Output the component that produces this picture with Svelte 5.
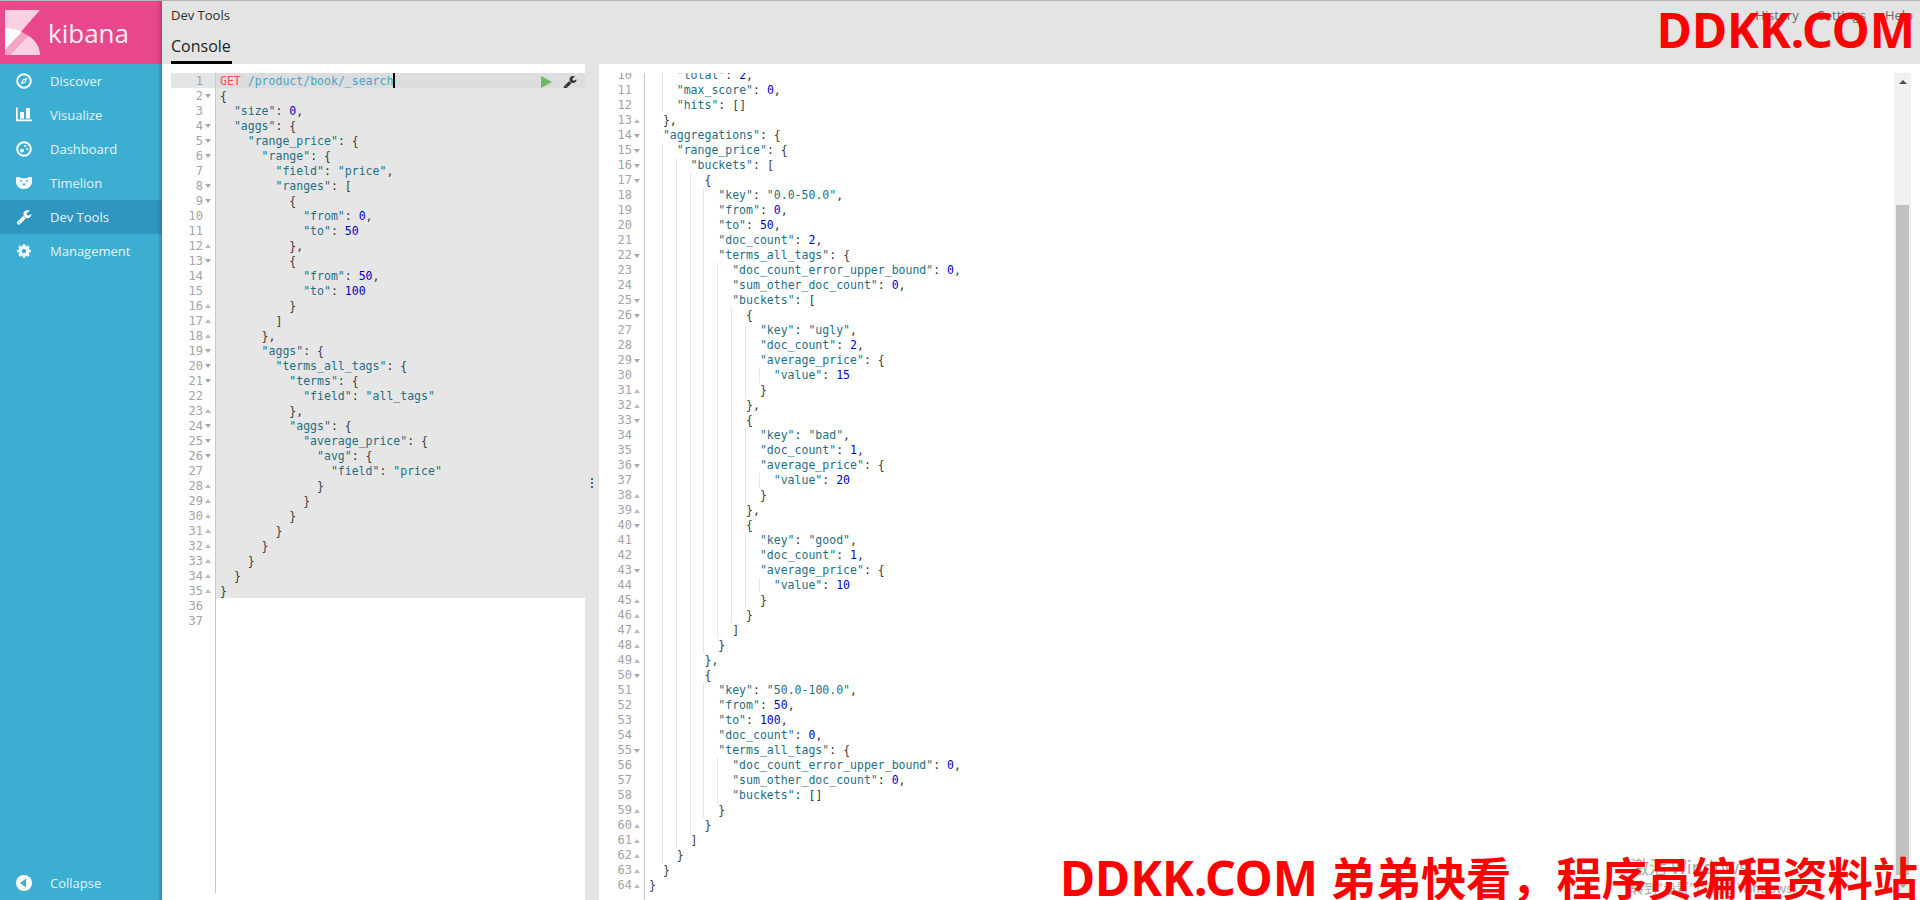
<script>
  const navItems = [
    { label: "Discover", icon: "discover" },
    { label: "Visualize", icon: "visualize" },
    { label: "Dashboard", icon: "dashboard" },
    { label: "Timelion", icon: "timelion" },
    { label: "Dev Tools", icon: "wrench", active: true },
    { label: "Management", icon: "gear" },
  ];

  const request = `GET /product/book/_search
{
  "size": 0,
  "aggs": {
    "range_price": {
      "range": {
        "field": "price",
        "ranges": [
          {
            "from": 0,
            "to": 50
          },
          {
            "from": 50,
            "to": 100
          }
        ]
      },
      "aggs": {
        "terms_all_tags": {
          "terms": {
            "field": "all_tags"
          },
          "aggs": {
            "average_price": {
              "avg": {
                "field": "price"
              }
            }
          }
        }
      }
    }
  }
}

`.split("\n");

  const response = `    "total": 2,
    "max_score": 0,
    "hits": []
  },
  "aggregations": {
    "range_price": {
      "buckets": [
        {
          "key": "0.0-50.0",
          "from": 0,
          "to": 50,
          "doc_count": 2,
          "terms_all_tags": {
            "doc_count_error_upper_bound": 0,
            "sum_other_doc_count": 0,
            "buckets": [
              {
                "key": "ugly",
                "doc_count": 2,
                "average_price": {
                  "value": 15
                }
              },
              {
                "key": "bad",
                "doc_count": 1,
                "average_price": {
                  "value": 20
                }
              },
              {
                "key": "good",
                "doc_count": 1,
                "average_price": {
                  "value": 10
                }
              }
            ]
          }
        },
        {
          "key": "50.0-100.0",
          "from": 50,
          "to": 100,
          "doc_count": 0,
          "terms_all_tags": {
            "doc_count_error_upper_bound": 0,
            "sum_other_doc_count": 0,
            "buckets": []
          }
        }
      ]
    }
  }
}`.split("\n");

  // open / close marker for the fold column
  function fold(line) {
    const t = line.trim();
    if (t.endsWith("{") || t.endsWith("[")) return "open";
    if (t.startsWith("}") || t.startsWith("]")) return "close";
    return "";
  }

  function tokens(line) {
    const out = [];
    const re = /"[^"]*"|-?\d+(?:\.\d+)?|[{}\[\]]|GET|\/\S*|[,:]|\s+/g;
    for (const m of line.trim().matchAll(re)) {
      const v = m[0];
      let type = "plain";
      if (v[0] === '"') type = "str";
      else if (/^-?\d/.test(v)) type = "num";
      else if (v === "GET") type = "method";
      else if (v[0] === "/") type = "url";
      else if (/[{}\[\]]/.test(v)) type = "paren";
      out.push({ v, type });
    }
    return out;
  }

  function indent(line) {
    return line.length - line.trimStart().length;
  }

  function guides(line) {
    const n = Math.max(0, Math.floor(indent(line) / 2) - 1);
    return Array.from({ length: n });
  }

  function rest(line) {
    const n = indent(line);
    return " ".repeat(n >= 2 ? 2 + (n % 2) : n);
  }
</script>

{#snippet codeLine(line)}
  <div class="line">
    {#each guides(line) as _}<span class="guide"></span>{/each}<span>{rest(line)}</span>{#each tokens(line) as t}<span class={t.type}>{t.v}</span>{/each}
  </div>
{/snippet}

{#snippet navIcon(name)}
  {#if name === "discover"}
    <svg viewBox="0 0 16 16" width="16" height="16">
      <circle cx="8" cy="8" r="6.8" fill="none" stroke="currentColor" stroke-width="2" />
      <path d="M11.6 4.4 9.4 9.4 4.4 11.6 6.6 6.6Z" fill="currentColor" />
      <circle cx="8" cy="8" r="1" fill="#3caed2" />
    </svg>
  {:else if name === "visualize"}
    <svg viewBox="0 0 16 16" width="16" height="16">
      <path d="M0 .4h1.7v12.2H16v1.700H0Z" fill="currentColor" />
      <rect x="4" y="5" width="4" height="6.600" fill="currentColor" />
      <rect x="10" y="1" width="4" height="10.600" fill="currentColor" />
    </svg>
  {:else if name === "dashboard"}
    <svg viewBox="0 0 16 16" width="16" height="16">
      <circle cx="8" cy="8" r="6.8" fill="none" stroke="currentColor" stroke-width="2" />
      <circle cx="6" cy="9.6" r="1.9" fill="currentColor" />
      <circle cx="9.2" cy="5" r="1.1" fill="currentColor" />
      <circle cx="11.2" cy="8" r="1.1" fill="currentColor" />
    </svg>
  {:else if name === "timelion"}
    <svg viewBox="0 0 16 16" width="16" height="16">
      <path d="M0 2h3.500l1 1.200h7l1-1.200H16v4.500c0 4.500-3.500 7.500-8 7.500s-8-3-8-7.500Z" fill="currentColor" />
      <circle cx="5" cy="6" r="1" fill="#3caed2" />
      <circle cx="11" cy="6" r="1" fill="#3caed2" />
      <path d="M6 8.500h4L8 11Z" fill="#3caed2" />
    </svg>
  {:else if name === "wrench"}
    <svg viewBox="0 0 1792 1792" width="16" height="16">
      <path d="M448 1472q0-26-19-45t-45-19-45 19-19 45 19 45 45 19 45-19 19-45zm644-420l-682 682q-37 37-90 37-52 0-91-37l-106-108q-38-36-38-90 0-53 38-91l681-681q39 98 114.5 173.5t173.5 114.5zm634-435q0 39-23 106-47 134-164.5 217.5t-258.5 83.5q-185 0-316.5-131.5t-131.5-316.5 131.5-316.5 316.5-131.5q58 0 121.5 16.5t107.5 46.5q16 11 16 28t-16 28l-293 169v224l193 107q5-3 79-48.5t135.500-81 70.5-35.5q15 0 23.5 10t8.5 25z" fill="currentColor" />
    </svg>
  {:else if name === "gear"}
    <svg viewBox="0 0 1792 1792" width="16" height="16">
      <path d="M1152 896q0-106-75-181t-181-75-181 75-75 181 75 181 181 75 181-75 75-181zm512-109v222q0 12-8 23t-20 13l-185 28q-19 54-39 91 35 50 107 138 10 12 10 25t-9 23q-27 37-99 108t-94 71q-12 0-26-9l-138-108q-44 23-91 38-16 136-29 186-7 28-36 28h-222q-14 0-24.5-8.5t-11.5-21.5l-28-184q-49-16-90-37l-141 107q-10 9-25 9-14 0-25-11-126-114-165-168-7-10-7-23 0-12 8-23 15-21 51-66.5t54-70.5q-27-50-41-99l-183-27q-13-2-21-12.5t-8-23.5v-222q0-12 8-23t19-13l186-28q14-46 39-92-40-57-107-138-10-12-10-24 0-10 9-23 26-36 98.5-107.5t94.5-71.5q13 0 26 10l138 107q44-23 91-38 16-136 29-186 7-28 36-28h222q14 0 24.5 8.5t11.5 21.5l28 184q49 16 90 37l142-107q9-9 24-9 13 0 25 10 129 119 165 170 7 8 7 22 0 12-8 23-15 21-51 66.5t-54 70.5q26 50 41 98l183 28q13 2 21 12.5t8 23.5z" fill="currentColor" />
    </svg>
  {/if}
{/snippet}

<div class="app">
  <aside class="sidebar">
    <div class="logo">
      <svg viewBox="0 0 35 45" width="35" height="45">
        <path d="M0 0H35L0 40Z" fill="#fbd0e2" />
        <path d="M0 40V18C6 18 12 19.500 17 22Z" fill="#fff" />
        <path d="M17 22 0 40V45H5L23 25.500C21 24.300 19 23 17 22Z" fill="#f5a5c5" />
        <path d="M23 25.500 5 45H35C35 37 30 30 23 25.500Z" fill="#fbd0e2" />
      </svg>
      <span class="brand">kibana</span>
    </div>
    <nav>
      {#each navItems as item}
        <div class="nav-item" class:active={item.active}>
          <span class="nav-icon">{@render navIcon(item.icon)}</span>
          <span>{item.label}</span>
        </div>
      {/each}
    </nav>
    <div class="nav-item collapse">
      <span class="nav-icon">
        <svg viewBox="0 0 16 16" width="16" height="16">
          <circle cx="8" cy="8" r="8" fill="currentColor" />
          <path d="M4 8 10 3.600V12.400Z" fill="#3caed2" />
        </svg>
      </span>
      <span>Collapse</span>
    </div>
  </aside>

  <main>
    <header>
      <div class="top-row">
        <span>Dev Tools</span>
        <div class="links">
          <span>History</span>
          <span>Settings</span>
          <span>Help</span>
        </div>
      </div>
      <div class="tab">Console</div>
    </header>

    <div class="panes">
      <section class="pane-left">
        <div class="editor">
          <div class="gutter">
            {#each request as line, i}
              <div class="ln" class:active-ln={i === 0}>
                {i + 1}<span class="fold {fold(line)}"></span>
              </div>
            {/each}
          </div>
          <div class="code request">
            {#each request as line, i}
              <div class="req-line" class:filled={i < 35} class:current={i === 0}>
                {@render codeLine(line)}
                {#if i === 0}
                  <span class="cursor"></span>
                  <div class="actions">
                    <svg viewBox="0 0 11 12" width="11" height="12"><path d="M0 0 11 6 0 12Z" fill="#70b95a" /></svg>
                    <svg viewBox="0 0 1792 1792" width="14" height="14"><path d="M448 1472q0-26-19-45t-45-19-45 19-19 45 19 45 45 19 45-19 19-45zm644-420l-682 682q-37 37-90 37-52 0-91-37l-106-108q-38-36-38-90 0-53 38-91l681-681q39 98 114.5 173.5t173.5 114.5zm634-435q0 39-23 106-47 134-164.5 217.5t-258.5 83.5q-185 0-316.5-131.5t-131.5-316.5 131.5-316.5 316.5-131.5q58 0 121.5 16.5t107.5 46.5q16 11 16 28t-16 28l-293 169v224l193 107q5-3 79-48.5t135.500-81 70.5-35.5q15 0 23.5 10t8.5 25z" fill="#333" /></svg>
                  </div>
                {/if}
              </div>
            {/each}
          </div>
        </div>
      </section>

      <div class="resizer"><span></span><span></span><span></span></div>

      <section class="pane-right">
        <div class="editor output">
          <div class="gutter">
            <div class="scrolled">
              {#each response as line, i}
                <div class="ln">{i + 10}<span class="fold {fold(line)}"></span></div>
              {/each}
            </div>
          </div>
          <div class="code">
            <div class="scrolled">
              {#each response as line}
                {@render codeLine(line)}
              {/each}
            </div>
          </div>
          <div class="scrollbar">
            <span class="arrow up"></span>
            <span class="thumb"></span>
            <span class="arrow down"></span>
          </div>
        </div>
      </section>
    </div>
  </main>

  <div class="activate">
    <div class="activate-title">激活 Windows</div>
    <div>转到"设置"以激活 Windows。</div>
  </div>
  <div class="mark mark-top">DDKK.COM</div>
  <div class="mark mark-bottom">DDKK.COM <span class="cjk">弟弟快看，程序员编程资料站</span></div>
</div>

<style>
  :global(body) {
    margin: 0;
    overflow: hidden;
  }

  .app {
    position: relative;
    display: flex;
    height: 899px;
    border-top: 1px solid #b4b4b4;
    overflow: hidden;
    font-family: "Open Sans", sans-serif;
    font-size: 13px;
    color: #2d2d2d;
  }

  .sidebar {
    position: relative;
    flex: 0 0 162px;
    display: flex;
    flex-direction: column;
    background: #3caed2;
    color: #e4f5fa;
  }

  .sidebar::after {
    content: "";
    position: absolute;
    top: 0;
    right: 0;
    bottom: 0;
    width: 5px;
    background: linear-gradient(90deg, rgba(0, 0, 0, 0), rgba(0, 0, 0, 0.18));
  }

  .logo {
    height: 63px;
    display: flex;
    align-items: center;
    gap: 8px;
    padding-left: 5px;
    background: #e8488b;
    color: #fdeef5;
  }

  .brand {
    font-size: 26px;
    line-height: 1;
    margin-top: 1px;
  }

  .nav-item {
    height: 34px;
    display: flex;
    align-items: center;
    gap: 18px;
    padding-left: 16px;
  }

  .nav-item.active {
    background: #2f96bf;
  }

  .nav-icon {
    display: flex;
    width: 16px;
    color: #fff;
  }

  .collapse {
    margin-top: auto;
  }

  main {
    flex: 1;
    min-width: 0;
    display: flex;
    flex-direction: column;
  }

  header {
    height: 63px;
    flex: none;
    padding-left: 9px;
    background: #e4e4e4;
    display: flex;
    flex-direction: column;
  }

  .top-row {
    height: 28px;
    display: flex;
    align-items: center;
    justify-content: space-between;
    padding-right: 7px;
  }

  .links {
    display: flex;
    gap: 19px;
    color: #6a6a6a;
  }

  .tab {
    width: 61px;
    height: 35px;
    box-sizing: border-box;
    border-bottom: 3px solid #000;
    font-size: 16px;
    line-height: 35px;
    white-space: nowrap;
    color: #222;
  }

  .panes {
    flex: 1;
    min-height: 0;
    display: flex;
  }

  .pane-left {
    flex: 0 0 423px;
    box-sizing: border-box;
    padding: 9px 0 7px 9px;
    background: #fff;
  }

  .resizer {
    flex: 0 0 14px;
    display: flex;
    flex-direction: column;
    align-items: center;
    justify-content: center;
    gap: 2px;
    padding-top: 2px;
    background: #e4e4e4;
  }

  .resizer span {
    width: 2px;
    height: 2px;
    background: #2a6f96;
  }

  .pane-right {
    flex: 1;
    min-width: 0;
    box-sizing: border-box;
    padding-top: 9px;
    background: #fff;
  }

  .editor {
    position: relative;
    height: 100%;
    display: flex;
    overflow: hidden;
    font-family: "DejaVu Sans Mono", monospace;
    font-size: 11.52px;
    line-height: 15px;
    color: #1f6f84;
  }

  .gutter {
    flex: none;
    width: 45px;
    box-sizing: border-box;
    border-right: 1px solid #c9c9c9;
    color: #a3a3a3;
    font-size: 12px;
    overflow: hidden;
  }

  .output .gutter {
    width: 46px;
  }

  .ln {
    position: relative;
    height: 15px;
    padding-right: 12px;
    text-align: right;
  }

  .active-ln {
    background: #e4e5e7;
  }

  /* request text sits a pixel lower than the response */
  .pane-left .ln,
  .request .line {
    line-height: 17px;
  }

  .fold {
    position: absolute;
    right: 4px;
    top: 6px;
    width: 0;
    height: 0;
    border-left: 3px solid transparent;
    border-right: 3px solid transparent;
  }

  .fold.open {
    border-top: 4px solid #a8a8a8;
  }

  .fold.close {
    border-bottom: 4px solid #bcbcbc;
  }

  .code {
    flex: 1;
    min-width: 0;
    overflow: hidden;
  }

  .output .code {
    padding-left: 4px;
  }

  .scrolled {
    margin-top: -5px;
  }

  .line {
    height: 15px;
    white-space: pre;
  }

  .request .line {
    padding-left: 4px;
  }

  .req-line {
    position: relative;
    height: 15px;
  }

  .req-line.filled {
    background: #e6e6e6;
  }

  .req-line.current {
    background: #dcddde;
  }

  .guide {
    display: inline-block;
    width: 2ch;
    height: 15px;
    box-sizing: border-box;
    border-right: 1px solid #e6e6e6;
    vertical-align: top;
  }

  .request .guide {
    border-color: transparent;
  }

  .cursor {
    position: absolute;
    left: 177px;
    top: 0;
    width: 2px;
    height: 15px;
    background: #000;
  }

  .actions {
    position: absolute;
    right: 8px;
    top: 2px;
    display: flex;
    align-items: center;
    gap: 11px;
  }

  .method {
    color: #e9574a;
  }

  .url {
    color: #46a6c8;
  }

  .num {
    color: #0000cd;
  }

  .paren {
    color: #3a3a3a;
  }

  .plain {
    color: #333;
  }

  .scrollbar {
    flex: 0 0 17px;
    display: flex;
    flex-direction: column;
    align-items: center;
    margin-right: 9px;
    background: #f0f0f0;
  }

  .arrow {
    flex: none;
    width: 0;
    height: 0;
    border-left: 4px solid transparent;
    border-right: 4px solid transparent;
  }

  .arrow.up {
    margin-top: 7px;
    border-bottom: 4px solid #505050;
  }

  .arrow.down {
    margin-top: 9px;
    border-top: 4px solid #a3a3a3;
  }

  .thumb {
    flex: none;
    width: 13px;
    height: 670px;
    margin-top: 121px;
    background: #c1c1c1;
  }

  .activate {
    position: absolute;
    left: 1631px;
    top: 853px;
    font-family: "Noto Sans CJK SC", sans-serif;
    font-size: 13px;
    line-height: 20px;
    color: #a8a8a8;
    white-space: nowrap;
  }

  .activate-title {
    font-size: 18px;
    line-height: 24px;
  }

  .mark {
    position: absolute;
    font-family: "Noto Sans", sans-serif;
    font-weight: 700;
    font-size: 48px;
    line-height: 60px;
    color: #f00;
    white-space: nowrap;
  }

  .mark-top {
    top: -1px;
    right: 5px;
  }

  .mark-bottom {
    bottom: -8px;
    right: 2px;
  }

  .cjk {
    font-family: "Noto Sans CJK SC", sans-serif;
    font-size: 45.2px;
  }
</style>
